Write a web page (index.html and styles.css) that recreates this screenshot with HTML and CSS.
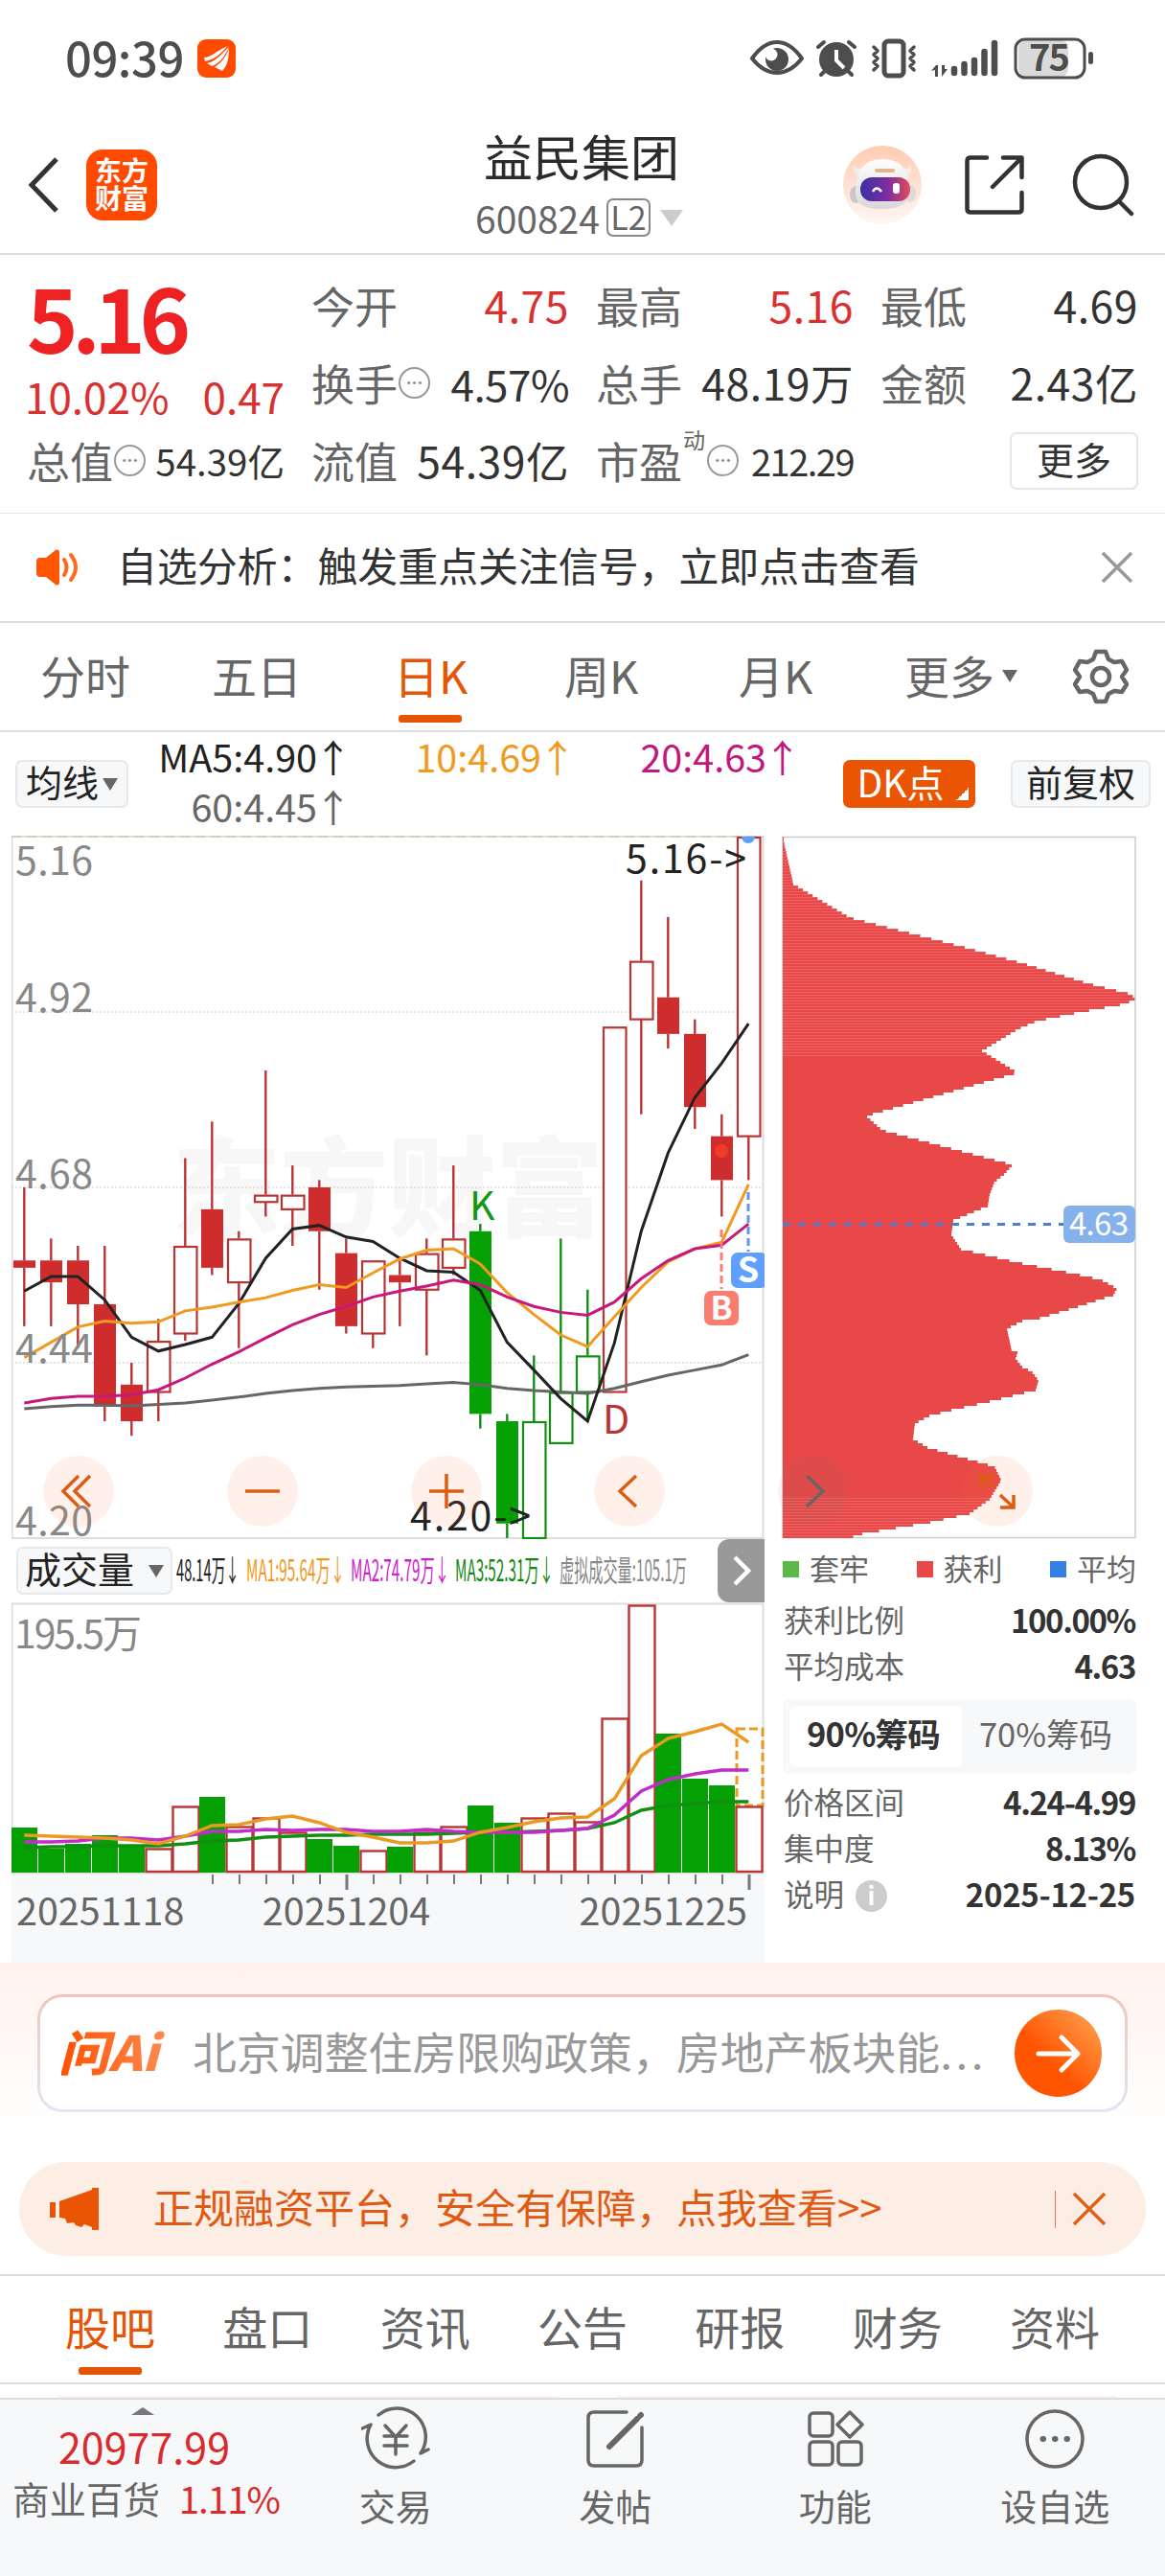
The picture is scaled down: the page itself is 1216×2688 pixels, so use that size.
FILE: index.html
```
<!DOCTYPE html>
<html lang="zh-CN">
<head>
    <meta charset="UTF-8">
    <meta name="viewport" content="width=device-width, initial-scale=1.0">
    <title>益民集团 600824</title>
    <link rel="stylesheet" href="styles.css">
</head>
<body>
    <div class="status-bar">
        <span class="clock">09:39</span>
        <svg class="status-app" width="40" height="40" viewBox="0 0 40 40">
            <rect width="40" height="40" rx="9" fill="#ff4a00"/>
            <path d="M7 19C15 19 19 12 32 7C26 12 22 20 8 23ZM10 25C20 23 25 15 33 8C29 17 24 25 15 28ZM18 29C26 24 30 17 33 10C33 20 31 28 26 33Z" fill="#fff"/>
        </svg>
        <svg class="status-icons" width="360" height="44" viewBox="0 0 360 44">
            <g fill="none" stroke="#4d4d4d" stroke-width="4" stroke-linecap="round" stroke-linejoin="round">
                <path d="M2 22Q14 5 28 5T54 22Q42 37 28 37T2 22Z"/>
                <path d="M71 10L77 5M109 10L103 5M74 39L79 34M106 39L101 34"/>
                <path d="M129 10L133 14L129 18L133 22L129 26L133 30L129 34M171 10L167 14L171 18L167 22L171 26L167 30L171 34" stroke-width="3.5"/>
                <rect x="140" y="4" width="20" height="36" rx="4" stroke-width="5"/>
            </g>
            <circle cx="28" cy="23" r="12" fill="#4d4d4d"/>
            <circle cx="22" cy="18" r="6.5" fill="#fff"/>
            <circle cx="90" cy="23" r="18" fill="#4d4d4d"/>
            <path d="M90 13V24L98 32" fill="none" stroke="#fff" stroke-width="4"/>
            <path d="M189 35L194 29H196V41H193V34ZM200 29V41L206 33H203V29Z" fill="#4d4d4d"/>
            <g stroke="#4d4d4d" stroke-width="6.5" stroke-linecap="round">
                <path d="M213 33V37M223.500 28V37M234 24V37M244.500 15V37M255 6V37"/>
            </g>
            <rect x="280" y="3" width="52" height="38" rx="8" fill="#dadada"/>
            <rect x="277" y="2" width="72" height="40" rx="10" fill="none" stroke="#4d4d4d" stroke-width="3"/>
            <rect x="353" y="15" width="5" height="13" rx="2.500" fill="#4d4d4d"/>
            <text x="291" y="35" class="battery-num" textLength="43">75</text>
        </svg>
    </div>

    <header class="header">
        <svg class="back" width="36" height="62" viewBox="0 0 36 62">
            <path d="M31 4L5 31L31 58" fill="none" stroke="#333" stroke-width="5"/>
        </svg>
        <div class="brand"><span>东方</span><span>财富</span></div>
        <div class="stock">
            <h1>益民集团</h1>
            <div class="stock-code">600824<span class="level">L2</span><i class="tri tri-code"></i></div>
        </div>
        <svg class="robot" width="82" height="82" viewBox="0 0 82 82">
            <defs>
                <linearGradient id="halo" x1="0" y1="0" x2="0" y2="1"><stop offset="0" stop-color="#ffccb2"/><stop offset="1" stop-color="#fff7f3"/></linearGradient>
                <linearGradient id="visor"><stop offset="0" stop-color="#3731a5"/><stop offset="0.550" stop-color="#7f2da0"/><stop offset="1" stop-color="#e34b5c"/></linearGradient>
                <linearGradient id="shell" x1="0" y1="0" x2="0" y2="1"><stop offset="0" stop-color="#fff"/><stop offset="1" stop-color="#d9d7d9"/></linearGradient>
            </defs>
            <circle cx="41" cy="41" r="41" fill="url(#halo)"/>
            <path d="M10 20Q10 28 17 32L23 23Q14 26 10 20ZM70 20Q73 27 67 32L60 23Q69 26 70 20Z" fill="#f1eeee"/>
            <ellipse cx="13" cy="51" rx="6" ry="9" fill="#c9c7c9"/>
            <ellipse cx="70" cy="50" rx="6" ry="9" fill="#dcdadb"/>
            <path d="M13 48Q13 14 41 14T69 46Q71 66 41 66T13 48Z" fill="url(#shell)"/>
            <rect x="33" y="24" width="21" height="4" rx="2" fill="#e7b48c"/>
            <rect x="18" y="33" width="52" height="25" rx="12" fill="url(#visor)"/>
            <path d="M31 48Q35 41 40 48" fill="none" stroke="#fff" stroke-width="2.500"/>
            <rect x="52" y="39" width="7" height="11" rx="3" fill="#fff"/>
        </svg>
        <svg class="share" width="62" height="62" viewBox="0 0 62 62">
            <g fill="none" stroke="#333" stroke-width="4.500" stroke-linecap="round" stroke-linejoin="round">
                <path d="M23 2.500H6Q2.500 2.500 2.500 6V56Q2.500 59.500 6 59.500H56Q59.500 59.500 59.500 56V39"/>
                <path d="M40 2.500H59.500V23M59 3L29 33"/>
            </g>
        </svg>
        <svg class="search" width="66" height="66" viewBox="0 0 66 66">
            <g fill="none" stroke="#333" stroke-width="4.500" stroke-linecap="round">
                <circle cx="30" cy="30" r="27"/>
                <path d="M50 51L62 63"/>
            </g>
        </svg>
    </header>

    <section class="quote">
        <div class="price">
            <div class="price-now">5.16</div>
            <div class="price-change"><span>10.02%</span><span>0.47</span></div>
        </div>
        <div class="cell"><label>今开</label><b class="up">4.75</b></div>
        <div class="cell"><label>最高</label><b class="up">5.16</b></div>
        <div class="cell"><label>最低</label><b>4.69</b></div>
        <div class="cell"><label>换手<i class="dots">•••</i></label><b class="rate">4.57%</b></div>
        <div class="cell"><label>总手</label><b>48.19万</b></div>
        <div class="cell"><label>金额</label><b>2.43亿</b></div>
        <div class="cell"><label>总值<i class="dots">•••</i></label><b class="small">54.39亿</b></div>
        <div class="cell"><label>流值</label><b>54.39亿</b></div>
        <div class="cell"><label>市盈<sup>动</sup><i class="dots dots-pe">•••</i></label><b class="small pe">212.29</b></div>
        <div class="cell cell-more"><button class="more-btn">更多</button></div>
    </section>

    <section class="notice">
        <svg width="50" height="42" viewBox="0 0 50 42">
            <path d="M2 15Q2 11 6 11H12L22 3Q26 1 26 6V36Q26 41 22 39L12 31H6Q2 31 2 27Z" fill="#ff5500"/>
            <path d="M31 13Q36 21 31 29M38 8Q48 21 38 34" fill="none" stroke="#ff6a1f" stroke-width="4" stroke-linecap="round"/>
        </svg>
        <p>自选分析：触发重点关注信号，立即点击查看</p>
        <svg class="notice-close" width="34" height="34" viewBox="0 0 34 34">
            <path d="M2 2L32 32M32 2L2 32" stroke="#999" stroke-width="3.500"/>
        </svg>
    </section>

    <nav class="periods">
        <a>分时</a>
        <a>五日</a>
        <a class="active">日K</a>
        <a>周K</a>
        <a>月K</a>
        <a>更多<i class="tri"></i></a>
        <svg width="60" height="60" viewBox="-30 -30 60 60">
            <g fill="none" stroke="#666" stroke-width="4.500" stroke-linejoin="round">
                <path d="M-5-26H5L8-18L14-15L22-16L27-7L22 0L27 8L22 16L14 15L8 18L5 26H-5L-8 18L-14 15L-22 16L-27 8L-22 0L-27-7L-22-16L-14-15L-8-18Z"/>
                <circle r="9"/>
            </g>
        </svg>
    </nav>

    <section class="averages">
        <button class="chip chip-ma">均线<i class="tri"></i></button>
        <div class="ma-list">
            <span class="ma5">MA5:4.90<i>↑</i></span>
            <span class="ma10">10:4.69<i>↑</i></span>
            <span class="ma20">20:4.63<i>↑</i></span>
            <span class="ma60">60:4.45<i>↑</i></span>
        </div>
        <button class="chip chip-dk">DK点</button>
        <button class="chip chip-fq">前复权</button>
    </section>

    <main class="charts">
        <div class="left">
            <svg id="kline" width="786" height="734" viewBox="12 871 786 734"></svg>
            <div class="volume-head">
                <button class="chip chip-vol">成交量<i class="tri"></i></button>
                <svg class="volume-text" width="540" height="48" viewBox="184 1615 540 48">
                    <text x="184" y="1650" textLength="66" lengthAdjust="spacingAndGlyphs" fill="#222">48.14万↓</text>
                    <text x="257" y="1650" textLength="103" lengthAdjust="spacingAndGlyphs" fill="#ee9922">MA1:95.64万↓</text>
                    <text x="366" y="1650" textLength="103" lengthAdjust="spacingAndGlyphs" fill="#cc22cc">MA2:74.79万↓</text>
                    <text x="475" y="1650" textLength="103" lengthAdjust="spacingAndGlyphs" fill="#118811">MA3:52.31万↓</text>
                    <text x="584" y="1650" textLength="133" lengthAdjust="spacingAndGlyphs" fill="#888">虚拟成交量:105.1万</text>
                </svg>
                <button class="next">
                    <svg width="22" height="34" viewBox="0 0 22 34"><path d="M4 3L18 17L4 31" fill="none" stroke="#fff" stroke-width="4.500"/></svg>
                </button>
            </div>
            <svg id="volume" width="786" height="284" viewBox="12 1671 786 284"></svg>
            <div class="dates">
                <span>20251118</span>
                <span>20251204</span>
                <span>20251225</span>
            </div>
        </div>

        <div class="right">
            <svg id="chips" width="370" height="734" viewBox="816 871 370 734"></svg>
            <div class="legend">
                <span><i class="green"></i>套牢</span>
                <span><i class="red"></i>获利</span>
                <span><i class="blue"></i>平均</span>
            </div>
            <div class="stat"><span>获利比例</span><b>100.00%</b></div>
            <div class="stat"><span>平均成本</span><b>4.63</b></div>
            <div class="segment">
                <span class="on">90%筹码</span>
                <span>70%筹码</span>
            </div>
            <div class="stat"><span>价格区间</span><b>4.24-4.99</b></div>
            <div class="stat"><span>集中度</span><b>8.13%</b></div>
            <div class="stat"><span>说明<i class="info">i</i></span><b class="date">2025-12-25</b></div>
        </div>

        <div class="tools">
            <svg viewBox="-37 -37 74 74"><path d="M0-16L-16 0L0 16M12-16L-4 0L12 16"/></svg>
            <svg viewBox="-37 -37 74 74"><path d="M-18 0H18"/></svg>
            <svg viewBox="-37 -37 74 74"><path d="M-18 0H18M0-18V18"/></svg>
            <svg viewBox="-37 -37 74 74"><path d="M7-16L-10 0L7 16"/></svg>
            <svg viewBox="-37 -37 74 74" class="off"><path d="M-7-16L10 0L-7 16"/></svg>
            <svg viewBox="-37 -37 74 74"><path d="M-17-2V-16H-3M-17-16L-4-4M17 4V17H3M3 4L17 17"/></svg>
        </div>
    </main>

    <section class="ask">
        <div class="ask-box">
            <svg class="ask-logo" width="112" height="60" viewBox="0 0 112 60">
                <defs><linearGradient id="fire"><stop offset="0" stop-color="#ff5000"/><stop offset="1" stop-color="#ff8a50"/></linearGradient></defs>
                <text x="-3" y="48" textLength="104" lengthAdjust="spacingAndGlyphs" fill="url(#fire)">问Ai</text>
            </svg>
            <p>北京调整住房限购政策，房地产板块能<span class="ellipsis">...</span></p>
            <button class="ask-go">
                <svg width="50" height="44" viewBox="0 0 50 44"><path d="M4 22H44M28 5L45 22L28 39" fill="none" stroke="#fff" stroke-width="5" stroke-linecap="round" stroke-linejoin="round"/></svg>
            </button>
        </div>
    </section>

    <section class="promo">
        <svg width="52" height="44" viewBox="0 0 52 44">
            <path d="M0 15H6V31H0ZM10 14L44 2V0H51V44H44V41L36 38L33 41L27 39L25 36L18 37L16 32L10 31Z" fill="#ea5504"/>
        </svg>
        <p>正规融资平台，安全有保障，点我查看&gt;&gt;</p>
        <i class="promo-line"></i>
        <svg width="36" height="36" viewBox="0 0 36 36"><path d="M2 2L34 34M34 2L2 34" stroke="#e0601a" stroke-width="3.500"/></svg>
    </section>

    <nav class="topics">
        <a class="active">股吧</a>
        <a>盘口</a>
        <a>资讯</a>
        <a>公告</a>
        <a>研报</a>
        <a>财务</a>
        <a>资料</a>
    </nav>
    <div class="peek"><i></i><i></i></div>

    <footer class="dock">
        <div class="index">
            <i class="tri-up"></i>
            <strong>20977.99</strong>
            <div><span>商业百货</span><em>1.11%</em></div>
        </div>
        <a>
            <svg width="72" height="72" viewBox="0 0 72 72">
                <path d="M18 11A30 30 0 0 1 62 51L70 47M55 59A30 30 0 0 1 10 21L1 25M25 22L36 34L47 22M24 33H48M24 43H48M36 34V52"/>
            </svg>
            交易
        </a>
        <a>
            <svg width="72" height="72" viewBox="0 0 72 72">
                <path d="M48 8H14Q8 8 8 14V58Q8 64 14 64H58Q64 64 64 58V24"/>
                <path d="M30 44L59 15M62 12L63 11" stroke-width="6"/>
            </svg>
            发帖
        </a>
        <a>
            <svg width="72" height="72" viewBox="0 0 72 72">
                <rect x="9" y="9" width="24" height="24" rx="4"/>
                <rect x="9" y="39" width="24" height="24" rx="4"/>
                <rect x="39" y="39" width="24" height="24" rx="4"/>
                <path d="M51 8L64 21L51 34L38 21Z"/>
            </svg>
            功能
        </a>
        <a>
            <svg width="72" height="72" viewBox="0 0 72 72">
                <circle cx="36" cy="36" r="29"/>
                <path d="M23.500 36H24M36 36H36.500M48.500 36H49" stroke-width="6"/>
            </svg>
            设自选
        </a>
    </footer>

    <script src="script.js"></script>
</body>
</html>
```
FILE: styles.css
```
* {
    margin: 0;
    padding: 0;
    box-sizing: border-box;
}
body {
    width: 1216px;
    height: 2688px;
    overflow: hidden;
    background: #fff;
    color: #333;
    font-family: "Noto Sans CJK SC", sans-serif;
    line-height: 1;
}
i, em {
    font-style: normal;
}
b {
    font-weight: normal;
}
svg {
    display: block;
    flex: none;
}
button {
    border: none;
    font-family: inherit;
    line-height: 1;
}
.tri {
    display: inline-block;
    border: 8px solid transparent;
    border-top: 13px solid #666;
    border-bottom: none;
}

/* status bar */
.status-bar {
    height: 122px;
    padding: 0 73px 0 68px;
    display: flex;
    align-items: center;
}
.clock {
    font-size: 49px;
    font-weight: 500;
    letter-spacing: -0.5px;
    color: #4d4d4d;
    position: relative;
    top: -3px;
}
.status-app {
    margin-left: 14px;
}
.status-icons {
    margin-left: auto;
}
.battery-num {
    font-size: 38px;
    font-weight: bold;
    fill: #4d4d4d;
}

/* header */
.header {
    height: 144px;
    padding-left: 28px;
    display: flex;
    align-items: flex-start;
    border-bottom: 2px solid #ddd;
}
.back {
    margin-top: 40px;
}
.brand {
    width: 74px;
    height: 74px;
    margin: 34px 0 0 26px;
    padding-top: 7px;
    border-radius: 17px;
    background: #ff4a00;
    color: #fff;
    font-size: 28px;
    font-weight: bold;
    line-height: 29px;
    text-align: center;
}
.brand span {
    display: block;
}
.stock {
    width: 240px;
    margin-left: 323px;
    text-align: center;
}
.stock h1 {
    margin-top: 12px;
    font-size: 51px;
    font-weight: normal;
    line-height: 56px;
    color: #2b2b2b;
}
.stock-code {
    display: flex;
    align-items: center;
    height: 40px;
    margin: 17px 0 0 9px;
    font-size: 39px;
    color: #666;
}
.level {
    width: 46px;
    height: 40px;
    margin-left: 7px;
    border: 2px solid #888;
    border-radius: 7px;
    font-size: 34px;
    line-height: 33px;
}
.tri-code {
    margin-left: 10px;
    border-width: 17px 12px 0;
    border-top-color: #ccc;
}
.robot {
    margin: 30px 0 0 153px;
}
.share {
    margin: 40px 0 0 45px;
}
.search {
    margin: 38px 0 0 50px;
}

/* quote */
.quote {
    height: 270px;
    padding: 14px 28px 0;
    display: grid;
    grid-template-columns: repeat(4, 269px);
    grid-template-rows: repeat(3, 81px);
    column-gap: 28px;
    border-bottom: 1px solid #e6e6e6;
}
.price {
    grid-row: span 2;
    color: #ee2222;
}
.price-now {
    margin: 1px 0 0 0;
    font-size: 91px;
    font-weight: bold;
    line-height: 96px;
    letter-spacing: -6.5px;
}
.price-change {
    display: flex;
    justify-content: space-between;
    margin: 14px 0 0 -2px;
    font-size: 44px;
    color: #d93030;
}
.cell {
    display: flex;
    align-items: center;
    justify-content: space-between;
    padding-bottom: 4px;
    white-space: nowrap;
}
.cell label {
    display: flex;
    align-items: center;
    font-size: 45px;
    color: #666;
}
.cell b {
    font-size: 44.5px;
    letter-spacing: 0.5px;
}
.cell .rate {
    font-size: 44px;
    letter-spacing: -0.5px;
}
.cell .small {
    font-size: 38.5px;
    letter-spacing: 0;
}
.cell .pe {
    font-size: 38px;
    letter-spacing: -1.5px;
}
.cell .up {
    color: #d93030;
}
.cell sup {
    align-self: flex-start;
    margin: -11px 0 0 1px;
    font-size: 23px;
}
.dots {
    width: 33px;
    height: 33px;
    margin-left: 1px;
    border: 2px solid #999;
    border-radius: 50%;
    color: #888;
    font-size: 11px;
    line-height: 28px;
    letter-spacing: 2px;
    text-align: center;
    text-indent: 2px;
    font-family: "Liberation Sans", sans-serif;
}
.dots-pe {
    margin-left: 2px;
}
.cell-more {
    justify-content: flex-end;
}
.more-btn {
    width: 134px;
    height: 60px;
    padding-bottom: 5px;
    border: 2px solid #e6e6e6;
    border-radius: 7px;
    background: #fff;
    color: #333;
    font-size: 39px;
}

/* notice */
.notice {
    height: 114px;
    padding: 0 33px 0 36px;
    display: flex;
    align-items: center;
    border-bottom: 2px solid #ddd;
}
.notice p {
    margin: -7px 0 0 36px;
    font-size: 41.9px;
}
.notice-close {
    margin-left: auto;
}

/* period tabs */
.periods {
    height: 114px;
    padding-left: 42px;
    display: grid;
    grid-template-columns: 179px 190px 178px 182px 173px 175px 60px;
    align-items: center;
    justify-items: start;
    border-bottom: 2px solid #ddd;
    font-size: 47px;
    color: #666;
}
.periods a, .topics a {
    display: flex;
    align-items: center;
    height: 100%;
    padding-bottom: 5px;
    position: relative;
}
.periods .tri {
    margin: 4px 0 0 8px;
}
.active {
    color: #e65505;
}
.active::after {
    content: "";
    position: absolute;
    left: 50%;
    bottom: 8px;
    width: 66px;
    height: 8px;
    margin-left: -34px;
    border-radius: 3px;
    background: #e65505;
}

/* moving average row */
.averages {
    height: 108px;
    padding: 0 15px 0 16px;
    display: flex;
    align-items: center;
}
.chip {
    height: 50px;
    padding-bottom: 6px;
    border: 2px solid #e6e8ec;
    border-radius: 7px;
    background: #f7f8fa;
    color: #222;
    font-size: 38px;
    white-space: nowrap;
}
.chip .tri {
    vertical-align: 6px;
    margin-left: 4px;
}
.chip-ma {
    width: 118px;
}
.ma-list {
    width: 700px;
    height: 104px;
    margin: -7px 0 0 30px;
    display: grid;
    grid-template-columns: 196px 234px 235px;
    grid-template-rows: 52px 52px;
    align-items: center;
    justify-items: end;
    font-size: 39.5px;
    white-space: nowrap;
}
.ma-list i {
    display: inline-block;
    width: 24px;
    margin-left: 5px;
    text-indent: -8px;
}
.ma5 {
    color: #222;
}
.ma10 {
    color: #f09a20;
}
.ma20 {
    color: #c2187c;
}
.ma60 {
    color: #666;
}
.chip-dk {
    width: 138px;
    margin-left: 16px;
    padding-right: 18px;
    border: none;
    background: linear-gradient(135deg, transparent 50%, #fff 50%) 118px 29px / 13px 13px no-repeat #ea5504;
    color: #fff;
    font-size: 39px;
}
.chip-fq {
    width: 146px;
    margin-left: auto;
}

/* charts */
.charts {
    height: 1176px;
    padding-left: 12px;
    display: flex;
    position: relative;
}
.left {
    width: 786px;
}
.right {
    width: 370px;
    margin-left: 18px;
}
.charts text {
    font-size: 41px;
}
.volume-head {
    height: 66px;
    display: flex;
    align-items: center;
}
.chip-vol {
    width: 163px;
    margin-left: 5px;
}
.chip-vol .tri {
    margin-left: 15px;
}
.charts .volume-text text {
    font-size: 31px;
}
.volume-text {
    margin-left: 4px;
}
.next {
    width: 49px;
    height: 66px;
    margin-left: auto;
    border-radius: 12px 0 0 12px;
    background: #999;
}
.next svg {
    margin: 0 auto;
}
.dates {
    height: 92px;
    padding: 14px 18px 0 5px;
    display: flex;
    justify-content: space-between;
    background: #f7f8fa;
    color: #666;
    font-size: 39.5px;
    line-height: 44px;
}
.dates span:nth-child(2) {
    margin-right: 74px;
}
.legend {
    height: 62px;
    padding-bottom: 4px;
    display: flex;
    align-items: center;
    justify-content: space-between;
    color: #666;
    font-size: 31px;
}
.legend span {
    display: flex;
    align-items: center;
}
.legend i {
    width: 17px;
    height: 17px;
    margin: 5px 11px 0 1px;
}
.green {
    background: #5aba47;
}
.red {
    background: #e84848;
}
.blue {
    background: #3580e3;
}
.stat {
    height: 48px;
    padding: 0 1px 4px 2px;
    display: flex;
    align-items: center;
    justify-content: space-between;
    color: #666;
    font-size: 31.5px;
}
.stat span {
    display: flex;
    align-items: center;
}
.stat b {
    color: #333;
    font-size: 33px;
    font-weight: bold;
    letter-spacing: -1.4px;
}
.stat .date {
    letter-spacing: -0.3px;
}
.info {
    width: 33px;
    height: 33px;
    margin: 5px 0 0 12px;
    border-radius: 50%;
    background: #ccc;
    color: #fff;
    font-size: 26px;
    font-weight: bold;
    line-height: 30px;
    text-align: center;
}
.segment {
    height: 78px;
    margin: 9px 0 7px 1px;
    padding: 7px;
    display: flex;
    border-radius: 8px;
    background: #f7f8fa;
    color: #666;
    font-size: 34.5px;
}
.segment span {
    flex: 1;
    border-radius: 8px;
    line-height: 57px;
    text-align: center;
}
.segment .on {
    padding-right: 5px;
    background: #fff;
    color: #333;
    font-weight: bold;
    letter-spacing: -0.8px;
}
.tools {
    position: absolute;
    left: 45px;
    top: 647px;
    display: flex;
    gap: 117.8px;
}
.tools svg {
    width: 74px;
    height: 74px;
    border-radius: 50%;
    background: rgba(255, 110, 40, 0.1);
    fill: none;
    stroke: #dd5c14;
    stroke-width: 3.5;
}
.tools .off {
    background: rgba(110, 120, 110, 0.08);
    stroke: #6e6262;
}

/* ask bar */
.ask {
    height: 208px;
    padding: 33px 39px 0;
    background: linear-gradient(#fff2ed, #fff 85%);
}
.ask-box {
    height: 123px;
    padding: 0 24px 0 22px;
    display: flex;
    align-items: center;
    border: 3px solid transparent;
    border-radius: 26px;
    background: linear-gradient(#fff, #fff) padding-box, linear-gradient(#f3c4bb, #dfe6f3) border-box;
}
.ask-box p {
    margin: -5px 0 0 25px;
    color: #999;
    font-size: 45.9px;
    white-space: nowrap;
}
.ellipsis {
    letter-spacing: 3.5px;
}
.ask-logo text {
    font-size: 50px;
    font-weight: 900;
    font-style: italic;
}
.ask-go {
    width: 91px;
    height: 91px;
    margin-left: auto;
    border-radius: 50%;
    background: linear-gradient(225deg, #ff9a48 10%, #ff5500 60%);
}
.ask-go svg {
    margin: 0 auto;
}

/* promo */
.promo {
    height: 98px;
    margin: 0 20px;
    padding: 0 41px 0 32px;
    display: flex;
    align-items: center;
    border-radius: 49px;
    background: #fceee5;
    color: #e05a14;
}
.promo p {
    margin: -6px 0 0 56px;
    font-size: 42px;
}
.promo-line {
    width: 1px;
    height: 39px;
    margin: 0 17px 0 auto;
    background: #d87a45;
}

/* topic tabs */
.topics {
    height: 115px;
    margin-top: 19px;
    padding: 0 68px;
    display: flex;
    justify-content: space-between;
    border-top: 2px solid #ddd;
    border-bottom: 2px solid #ddd;
    color: #666;
    font-size: 47px;
}
.topics a {
    padding-bottom: 8px;
}
.topics .active {
    color: #e65505;
}
.topics .active::after {
    margin-left: -33px;
}
.peek {
    height: 14px;
    padding: 12px 50px 0 60px;
    display: flex;
    gap: 60px;
}
.peek i {
    flex: 1;
    background: #fcf3ef;
}

/* dock */
.dock {
    height: 187px;
    display: flex;
    border-top: 2px solid #ddd;
    background: #f7f8fa;
    color: #666;
    font-size: 38px;
}
.index {
    width: 298px;
    display: flex;
    flex-direction: column;
    align-items: center;
}
.tri-up {
    margin-top: 8px;
    border: 12px solid transparent;
    border-top: none;
    border-bottom: 8px solid #77777c;
}
.index strong {
    margin: 11px 0 0 3px;
    color: #d92b2b;
    font-size: 43px;
    font-weight: normal;
}
.index div {
    width: 298px;
    padding: 13px 6px 0 13px;
    display: flex;
    justify-content: space-between;
    font-size: 38.5px;
}
.index em {
    color: #d92b2b;
    letter-spacing: -1px;
}
.dock a {
    width: 229.5px;
    display: flex;
    flex-direction: column;
    align-items: center;
    padding-top: 5px;
}
.dock a svg {
    margin-bottom: 14px;
    fill: none;
    stroke: #666;
    stroke-width: 3.5;
    stroke-linecap: round;
    stroke-linejoin: round;
}
```
FILE: script.js
```
// open, close, high, low, style (f = filled, h = hollow, F/H = green)
const candles = [
    [4.58, 4.57, 4.68, 4.49, 'f'], [4.58, 4.55, 4.61, 4.49, 'f'], [4.58, 4.52, 4.60, 4.46, 'f'],
    [4.52, 4.38, 4.60, 4.36, 'f'], [4.41, 4.36, 4.44, 4.34, 'f'], [4.40, 4.47, 4.50, 4.36, 'h'],
    [4.48, 4.60, 4.72, 4.47, 'h'], [4.65, 4.57, 4.77, 4.56, 'f'], [4.55, 4.61, 4.62, 4.46, 'h'],
    [4.66, 4.67, 4.84, 4.64, 'h'], [4.65, 4.67, 4.71, 4.60, 'h'], [4.68, 4.62, 4.69, 4.54, 'f'],
    [4.59, 4.49, 4.61, 4.48, 'f'], [4.48, 4.58, 4.58, 4.46, 'h'], [4.56, 4.55, 4.58, 4.49, 'f'],
    [4.54, 4.59, 4.61, 4.45, 'h'], [4.57, 4.61, 4.71, 4.56, 'h'], [4.62, 4.37, 4.63, 4.35, 'F'],
    [4.36, 4.22, 4.37, 4.20, 'F'], [4.20, 4.36, 4.45, 4.20, 'H'], [4.33, 4.40, 4.61, 4.33, 'H'],
    [4.40, 4.45, 4.54, 4.36, 'H'], [4.40, 4.90, 4.90, 4.40, 'h'], [4.91, 4.99, 5.10, 4.78, 'h'],
    [4.94, 4.89, 5.05, 4.87, 'f'], [4.89, 4.79, 4.91, 4.76, 'f'], [4.75, 4.69, 4.78, 4.64, 'f'],
    [4.75, 5.16, 5.16, 4.69, 'h']
];
const averages = [
    ['#666', [4.377, 4.380, 4.382, 4.382, 4.381, 4.383, 4.385, 4.389, 4.393, 4.398, 4.402, 4.405, 4.407, 4.408, 4.409, 4.411, 4.413, 4.410, 4.405, 4.402, 4.400, 4.398, 4.405, 4.414, 4.423, 4.430, 4.437, 4.451]],
    ['#222', [4.538, 4.558, 4.558, 4.526, 4.475, 4.456, 4.465, 4.475, 4.521, 4.583, 4.623, 4.628, 4.612, 4.606, 4.583, 4.566, 4.564, 4.539, 4.468, 4.430, 4.391, 4.360, 4.467, 4.620, 4.727, 4.803, 4.850, 4.904]],
    ['#f09a20', [4.447, 4.468, 4.489, 4.497, 4.494, 4.496, 4.511, 4.516, 4.523, 4.529, 4.539, 4.547, 4.543, 4.563, 4.582, 4.594, 4.596, 4.575, 4.536, 4.506, 4.478, 4.462, 4.503, 4.543, 4.578, 4.596, 4.605, 4.684]],
    ['#c9187c', [4.385, 4.391, 4.394, 4.394, 4.396, 4.403, 4.419, 4.438, 4.455, 4.474, 4.492, 4.506, 4.517, 4.530, 4.538, 4.545, 4.553, 4.547, 4.530, 4.517, 4.509, 4.505, 4.523, 4.555, 4.580, 4.596, 4.601, 4.630]]
];

const RED = '#cf2d2d', RED_LINE = '#b93434', GREEN = '#04a004', GREEN_LINE = '#118f11';
const px = i => 25.3 + 28 * i;
const py = v => 872 + (5.16 - v) * 762.5;

function rect(x, y, w, h, attrs) {
    return `<rect x="${x}" y="${y}" width="${w}" height="${h}" ${attrs}/>`;
}
function seg(x1, y1, x2, y2, attrs) {
    return `<path d="M${x1} ${y1}L${x2} ${y2}" fill="none" ${attrs}/>`;
}
function poly(points, color, width) {
    return `<polyline points="${points.join(' ')}" fill="none" stroke="${color}" stroke-width="${width}"/>`;
}
function label(x, y, text, width, color) {
    return `<text x="${x}" y="${y}" textLength="${width}" fill="${color}">${text}</text>`;
}

function drawKline() {
    let s = rect(12.5, 872, 784, 732, 'fill="none" stroke="#ddd" stroke-width="2"');
    s += '<text x="180" y="1280" textLength="450" style="font-size:113px;font-weight:900" fill="#f7f7f7">东方财富</text>';
    s += seg(12, 872, 797, 872, 'stroke="#cdb98f" stroke-dasharray="10 6"');
    [4.92, 4.68, 4.44].forEach(v => {
        s += seg(12, py(v), 797, py(v), 'stroke="#ccc" stroke-dasharray="2 2"');
    });
    candles.forEach(([o, c, hi, lo, kind], i) => {
        const green = kind === 'F' || kind === 'H';
        const line = green ? GREEN_LINE : RED_LINE;
        const top = py(Math.max(o, c)), bottom = py(Math.min(o, c)), x = px(i);
        s += seg(x, py(hi), x, top, `stroke="${line}" stroke-width="2.4"`);
        s += seg(x, bottom, x, py(lo), `stroke="${line}" stroke-width="2.4"`);
        if (kind.toLowerCase() === 'f') {
            s += rect(x - 11.3, top, 23, bottom - top, `fill="${green ? GREEN : RED}"`);
        } else {
            s += rect(x - 11.3, top + 1, 23.5, Math.max(bottom - top - 1, 1), `fill="#fff" stroke="${line}" stroke-width="2.2"`);
        }
    });
    averages.forEach(([color, list]) => {
        s += poly(list.map((v, i) => px(i) + ',' + py(v)), color, 3);
    });
    s += label(16, 912, '5.16', 81, '#888') + label(16, 1055, '4.92', 81, '#888') + label(16, 1239, '4.68', 81, '#888');
    s += label(16, 1421, '4.44', 81, '#888') + label(16, 1601, '4.20', 81, '#888');
    s += label(653, 910, '5.16-&gt;', 126, '#222') + label(428, 1596, '4.20-&gt;', 126, '#222');
    s += label(490, 1272, 'K', 28, '#119911') + label(629, 1495, 'D', 32, '#b93434');
    // buy and sell points
    s += '<circle cx="753" cy="1200" r="7" fill="#f23a26"/><path d="M774 872A7 7 0 0 0 788 872Z" fill="#5fa0ff"/>';
    s += seg(753, 1282, 753, 1344, 'stroke="#fb7d70" stroke-width="3" stroke-dasharray="8 4"');
    s += seg(781, 1243, 781, 1305, 'stroke="#5b9af0" stroke-width="3" stroke-dasharray="8 4"');
    s += rect(735, 1346, 36, 36, 'rx="7" fill="#fb7d70"') + rect(763, 1306, 38, 37, 'rx="7" fill="#5fa0ff"');
    s += '<text x="753" y="1376" text-anchor="middle" style="font-size:34px;font-weight:bold" fill="#fff">B</text>';
    s += '<text x="781" y="1337" text-anchor="middle" style="font-size:36px;font-weight:bold" fill="#fff">S</text>';
    document.getElementById('kline').innerHTML = s;
}

// bar heights in pixels, 195.5万 is the full 280
const volumes = [
    [47, 1], [25, 1], [30, 1], [39, 1], [28, 1], [26, 0], [70, 0], [79, 1], [49, 0], [58, 0], [43, 0], [35, 1], [28, 1], [24, 0],
    [27, 1], [43, 0], [49, 0], [70, 1], [52, 1], [58, 0], [63, 0], [54, 0], [162, 0], [280, 0], [145, 1], [98, 1], [91, 1], [70, 0]
];
const volumeLines = [
    ['#118f11', [26, 27, 27, 28, 28, 28, 30, 33, 34, 37, 38, 39, 39, 40, 40, 40, 41, 42, 42, 43, 44, 46, 52, 65, 70, 72, 74, 74]],
    ['#c32cc8', [32, 32, 33, 36, 36, 34, 38, 43, 43, 45, 44, 45, 45, 43, 43, 45, 43, 42, 42, 42, 44, 46, 60, 85, 97, 103, 107, 107]],
    ['#ea9a22', [39, 38, 37, 36, 34, 30, 38, 49, 50, 56, 59, 52, 42, 37, 31, 31, 33, 42, 47, 53, 57, 58, 77, 122, 140, 147, 155, 136]]
];

function drawVolume() {
    const base = 1953;
    let s = rect(12.5, 1672.5, 784, 281, 'fill="none" stroke="#ddd" stroke-width="2"');
    s += rect(769, 1803, 27, 80, 'fill="none" stroke="#ea9a22" stroke-width="3" stroke-dasharray="9 4"');
    volumes.forEach(([h, green], i) => {
        const x = 12 + 28 * i;
        s += green
            ? rect(x, base - h, 27, h, `fill="${GREEN}"`)
            : rect(x + 0.5, base - h + 1.5, 27, h - 2.5, `fill="#fff" stroke="${RED_LINE}" stroke-width="2.4"`);
    });
    volumeLines.forEach(([color, list]) => {
        s += poly(list.map((h, i) => px(i) + ',' + (base - h)), color, 3.4);
    });
    s += label(15, 1719, '195.5万', 133, '#888');
    document.getElementById('volume').innerHTML = s;

    // day ticks above the dates
    let ticks = '';
    for (let i = 7; i < 28; i++) {
        const big = i === 12 || i === 27;
        ticks += seg(px(i) + 0.7, 0, px(i) + 0.7, big ? 16 : 10, `stroke="#777" stroke-width="${big ? 3 : 2}"`);
    }
    document.querySelector('.dates').insertAdjacentHTML('beforebegin',
        `<svg width="786" height="0" viewBox="12 0 786 16" style="height:16px;margin-bottom:-16px;position:relative">${ticks}</svg>`);
}

// outline of the cost distribution: x, y
const outline = [
    [817, 872], [828, 921], [887, 956], [1007, 987], [1072, 1005], [1137, 1025], [1181, 1036], [1185, 1042], [1169, 1047],
    [1126, 1055], [1082, 1064], [1063, 1072], [1025, 1095], [1062, 1118], [904, 1163], [921, 1178], [1057, 1214], [1048, 1224],
    [1038, 1232], [1033, 1245], [1031, 1257], [995, 1272], [993, 1287], [1003, 1302], [1062, 1316], [1123, 1328], [1149, 1334],
    [1166, 1343], [1162, 1350], [1119, 1364], [1082, 1375], [1067, 1377], [1051, 1385], [1056, 1408], [1062, 1410], [1060, 1416],
    [1067, 1425], [1077, 1430], [1084, 1439], [1081, 1449], [1033, 1461], [993, 1470], [970, 1476], [955, 1484], [953, 1500],
    [968, 1509], [1010, 1521], [1038, 1529], [1045, 1543], [1033, 1563], [1012, 1578], [971, 1587], [935, 1593], [900, 1599], [881, 1605]
];

function drawChips() {
    let s = rect(817, 872.5, 368, 731, 'fill="#fff" stroke="#ccc" stroke-width="1.5"');
    let k = 0;
    for (let y = 872; y < 1604; y += 3) {
        while (k < outline.length - 2 && outline[k + 1][1] <= y + 1) k++;
        const [x1, y1] = outline[k], [x2, y2] = outline[k + 1];
        const x = x1 + (x2 - x1) * (y + 1 - y1) / (y2 - y1);
        s += rect(817, y, Math.max(x - 817, 1).toFixed(1), Math.min(3, 1604 - y), 'fill="#e84848"');
        if (y < 1102 || y > 1560) {
            s += rect(817, y, Math.max(x - 817, 1).toFixed(1), 0.7, 'fill="#f07070"');
        }
    }
    s += seg(817, 1276.5, 1110, 1276.5, 'stroke="#4a7fd0" stroke-width="3" stroke-dasharray="8 8"');
    s += rect(1110, 1257, 75, 39, 'rx="6" fill="#86b2ec"');
    s += '<text x="1116" y="1288" textLength="62" style="font-size:33px" fill="#fff">4.63</text>';
    document.getElementById('chips').innerHTML = s;
}

drawKline();
drawVolume();
drawChips();
```
